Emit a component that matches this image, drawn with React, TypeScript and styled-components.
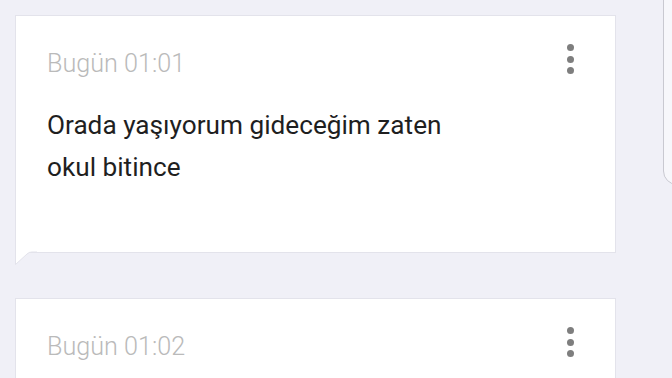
import styled, { createGlobalStyle } from "styled-components";

const GlobalStyle = createGlobalStyle`
  html, body {
    margin: 0;
    padding: 0;
    background: #f0f0f7;
    font-family: Roboto, "Noto Sans", sans-serif;
    overflow: hidden;
  }
`;

const Page = styled.div`
  position: relative;
  width: 672px;
  height: 378px;
  overflow: hidden;
  box-sizing: border-box;
  padding: 15px 0 0 15px;
  display: flex;
  flex-direction: column;
  gap: 45px;
`;

const Card = styled.div<{ $height: number }>`
  position: relative;
  flex: none;
  width: 601px;
  height: ${(p) => p.$height}px;
  box-sizing: border-box;
  background: #ffffff;
  border: 1px solid #e3e3eb;
  padding: 32px 41px 0 31px;
`;

const Header = styled.div`
  display: flex;
  align-items: flex-start;
  justify-content: space-between;
`;

const Time = styled.div`
  font-size: 25.2px;
  font-weight: 300;
  line-height: 32px;
  color: #bababa;
`;

const Message = styled.div`
  margin-top: 24px;
  font-size: 26.2px;
  font-weight: 400;
  line-height: 42px;
  color: #1f1f1f;
`;

const Dots = styled.div`
  display: flex;
  flex-direction: column;
  gap: 4.7px;
  margin-top: -4px;
  span {
    width: 7px;
    height: 7px;
    border-radius: 50%;
    background: #7e7e7e;
  }
`;

const Tail = styled.svg`
  position: absolute;
  left: -1px;
  top: calc(100% - 1px);
  display: block;
`;

const SidePanel = styled.div`
  position: absolute;
  left: 663px;
  top: -20px;
  width: 30px;
  height: 205px;
  box-sizing: border-box;
  border: 1px solid #c9c9d1;
  border-bottom-left-radius: 14px;
  background: #f7f7fb;
`;

function More() {
  return (
    <Dots>
      <span />
      <span />
      <span />
    </Dots>
  );
}

export default function App() {
  return (
    <Page>
      <GlobalStyle />
      <Card $height={238}>
        <Header>
          <Time>Bugün 01:01</Time>
          <More />
        </Header>
        <Message>
          Orada yaşıyorum gideceğim zaten
          <br />
          okul bitince
        </Message>
        <Tail width="22" height="15" viewBox="0 0 22 15">
          <path d="M0.5 0 V13.5 L12 3 Q14 1 17 1 H22 V0 Z" fill="#ffffff" />
          <path
            d="M0.5 0 V13.5 L12 3 Q14 1 17 1 H22"
            fill="none"
            stroke="#e3e3eb"
            strokeWidth="1"
          />
        </Tail>
      </Card>
      <Card $height={120}>
        <Header>
          <Time>Bugün 01:02</Time>
          <More />
        </Header>
      </Card>
      <SidePanel />
    </Page>
  );
}
